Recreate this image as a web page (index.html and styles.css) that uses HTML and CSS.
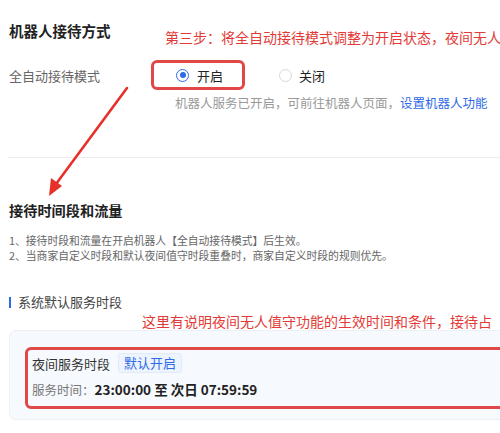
FILE: index.html
```html
<!DOCTYPE html>
<html lang="zh-CN">
<head>
<meta charset="utf-8">
<link rel="stylesheet" href="styles.css">
</head>
<body>
<div class="page">
  <section class="sec1">
    <h2 class="title">机器人接待方式</h2>
    <div class="row">
      <div class="label">全自动接待模式</div>
      <div class="hl-box">
        <span class="radio on"></span><span class="opt">开启</span>
      </div>
      <div class="opt-off">
        <span class="radio"></span><span class="opt">关闭</span>
      </div>
    </div>
    <div class="hint">机器人服务已开启，可前往机器人页面，<a class="link">设置机器人功能</a></div>
  </section>
  <div class="divider"></div>
  <section class="sec2">
    <h2 class="title t2">接待时间段和流量</h2>
    <div class="notes">
      <p>1、接待时段和流量在开启机器人【全自动接待模式】后生效。</p>
      <p>2、当商家自定义时段和默认夜间值守时段重叠时，商家自定义时段的规则优先。</p>
    </div>
    <div class="sub"><span class="bar"></span>系统默认服务时段</div>
    <div class="card">
      <div class="hl-card">
        <div class="line1"><span class="name">夜间服务时段</span><span class="tag">默认开启</span></div>
        <div class="line2"><span class="k">服务时间：</span><span class="v">23:00:00 至 次日 07:59:59</span></div>
      </div>
    </div>
  </section>

  <div class="anno anno1">第三步：将全自动接待模式调整为开启状态，夜间无人</div>
  <div class="anno anno2">这里有说明夜间无人值守功能的生效时间和条件，接待占</div>
  <svg class="arrow" width="500" height="433" viewBox="0 0 500 433">
    <line x1="127" y1="88" x2="56" y2="184" stroke="#e8302a" stroke-width="2.6" stroke-linecap="round"/>
    <polygon points="49,196 51,178 62,186" fill="#e8302a"/>
  </svg>
</div>
</body>
</html>
```

FILE: styles.css
```css
* { box-sizing: border-box; }
html, body { margin: 0; padding: 0; background: #fff; }
body {
  font-family: "Noto Sans CJK SC", "Noto Sans", sans-serif;
  color: #222;
  width: 500px;
  height: 433px;
  overflow: hidden;
}
.page {
  position: relative;
  width: 500px;
  height: 433px;
  overflow: hidden;
  padding-left: 9px;
}
.sec1 { padding-top: 22px; }
.title {
  margin: 0;
  font-size: 14.5px;
  line-height: 18px;
  font-weight: 700;
  color: #222;
  white-space: nowrap;
}
.t2 { font-size: 14.2px; }
.row {
  display: flex;
  align-items: center;
  margin-top: 20px;
  height: 30px;
}
.label {
  width: 142px;
  font-size: 13px;
  color: #666;
  white-space: nowrap;
}
.hl-box {
  width: 94px;
  height: 30px;
  border: 3px solid #e04848;
  border-radius: 6px;
  display: flex;
  align-items: center;
  padding-left: 22px;
}
.radio {
  width: 13px;
  height: 13px;
  border-radius: 50%;
  border: 1px solid #d8d8d8;
  background: #fff;
  display: inline-block;
  flex: none;
  position: relative;
}
.radio.on { border-color: #2f6ae6; }
.radio.on::after {
  content: "";
  position: absolute;
  left: 2.5px; top: 2.5px;
  width: 6px; height: 6px;
  border-radius: 50%;
  background: #2f6ae6;
}
.opt {
  font-size: 13px;
  color: #222;
  margin-left: 8px;
  white-space: nowrap;
}
.opt-off {
  display: flex;
  align-items: center;
  margin-left: 34px;
}
.opt-off .opt { margin-left: 7px; }
.hint {
  margin-top: 5px;
  padding-left: 166px;
  font-size: 12.5px;
  line-height: 16px;
  color: #999;
  white-space: nowrap;
}
.link { color: #2f6ae6; }
.divider {
  margin-top: 46px;
  height: 1px;
  background: #ececec;
  margin-left: -1px;
}
.t2 { margin-top: 43px; }
.notes {
  margin-top: 14px;
  font-size: 10.8px;
  line-height: 15px;
  color: #666;
}
.notes p { margin: 0; white-space: nowrap; }
.sub {
  margin-top: 30px;
  display: flex;
  align-items: center;
  font-size: 13px;
  line-height: 18px;
  color: #444;
}
.bar {
  width: 2px;
  height: 11px;
  background: #2f6ae6;
  margin-right: 7px;
}
.card {
  margin-top: 19px;
  width: 520px;
  height: 90px;
  background: #f6f9fd;
  border: 1px solid #edf0f4;
  border-radius: 7px;
  padding: 16px 0 0 15px;
}
.hl-card {
  height: 62px;
  border: 3px solid #e04848;
  border-radius: 6px;
  padding: 3px 0 0 4px;
}
.line1 {
  display: flex;
  align-items: center;
  height: 20px;
}
.name { font-size: 13px; color: #333; }
.tag {
  margin-left: 8px;
  font-size: 13px;
  line-height: 16px;
  color: #2f6ae6;
  background: #eef4ff;
  border: 1px solid #e2eaf8;
  border-radius: 3px;
  padding: 1px 5px;
}
.line2 {
  margin-top: 6px;
  display: flex;
  align-items: center;
  height: 20px;
  white-space: nowrap;
}
.k { font-size: 12.5px; color: #777; }
.v { font-size: 13.5px; font-weight: 700; color: #222; }

.anno {
  position: absolute;
  color: #e23a36;
  font-size: 14px;
  line-height: 18px;
  white-space: nowrap;
}
.anno1 { left: 165px; top: 28px; }
.anno2 { left: 142px; top: 312px; }
.arrow { position: absolute; left: 0; top: 0; pointer-events: none; }
```
